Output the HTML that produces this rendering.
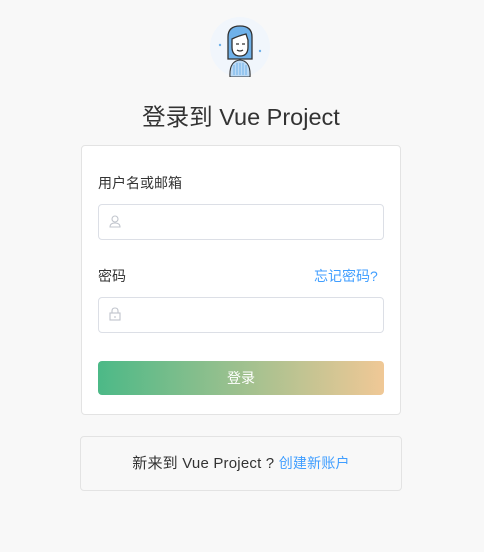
<!DOCTYPE html>
<html><head><meta charset="utf-8"><style>
body{margin:0;width:484px;height:552px;background:#f8f8f8;font-family:"Liberation Sans","Noto Sans CJK SC",sans-serif;position:relative;overflow:hidden}
.abs{position:absolute}
.title{left:0;width:482px;top:98px;text-align:center;font-size:23.5px;color:#333}
.card{left:81px;top:145px;width:318px;height:268px;background:#fff;border:1px solid #e3e3e3;border-radius:4px}
.lbl{font-size:14px;color:#333}
.inp{left:98px;width:284px;height:34px;border:1px solid #dcdfe6;border-radius:4px;background:#fff}
.btn{left:98px;top:361px;width:286px;height:34px;border-radius:4px;background:linear-gradient(90deg,#4cb987,#f0c896);color:#fff;font-size:14px;text-align:center;line-height:34px}
.foot{left:80px;top:436px;width:320px;height:53px;border:1px solid #e3e3e3;border-radius:4px;background:#f8f8f8;text-align:center;line-height:53px;font-size:15px;color:#333;letter-spacing:0.2px}
a{color:#409eff;text-decoration:none;font-size:14px}
</style></head><body>
<svg class="abs" style="left:210px;top:17px" width="60" height="60" viewBox="0 0 60 60">
<circle cx="30" cy="30" r="30" fill="#f1f6fc"/>
<path d="M18 42 V20 Q18 9 30 9 Q42 9 42 20 V42 Z" fill="#6fb1e9" stroke="#333" stroke-width="1.3"/>
<path d="M22 22 Q28 19 36 17 L38 23 V30 Q38 39 30 39 Q22 39 22 30 Z" fill="#fff" stroke="#333" stroke-width="1.3"/>
<path d="M26 27 h3 M32 27 h3" stroke="#333" stroke-width="1.2"/>
<path d="M27 33 Q30 35 33 33" stroke="#333" fill="none" stroke-width="1.2"/>
<path d="M20 60 Q19 44 30 43 Q41 44 40 60 Z" fill="#bcdaf5" stroke="#333" stroke-width="1.1"/>
<path d="M24 48 V58 M27 46 V58 M30 46 V58 M33 46 V58 M36 48 V58" stroke="#6fb1e9" stroke-width="1"/>
<circle cx="10" cy="28" r="1.2" fill="#6fb1e9"/><circle cx="50" cy="34" r="1.2" fill="#6fb1e9"/>
</svg>
<div class="abs title">登录到 Vue Project</div>
<div class="abs card"></div>
<div class="abs lbl" style="left:98px;top:173px">用户名或邮箱</div>
<div class="abs inp" style="top:204px"></div>
<svg class="abs" style="left:108px;top:214px" width="14" height="14" viewBox="0 0 14 14" fill="none" stroke="#c0c4cc" stroke-width="1.1"><circle cx="7" cy="5" r="3"/><path d="M2 13 Q2 9 7 9 Q12 9 12 13 Z"/></svg>
<div class="abs lbl" style="left:98px;top:266px">密码</div>
<a class="abs" style="left:314px;top:266px">忘记密码?</a>
<div class="abs inp" style="top:297px"></div>
<svg class="abs" style="left:108px;top:307px" width="14" height="14" viewBox="0 0 14 14" fill="none" stroke="#c0c4cc" stroke-width="1.1"><path d="M4 6 V4 Q4 1 7 1 Q10 1 10 4 V6"/><rect x="2" y="6" width="10" height="7"/><path d="M7 9 V11"/></svg>
<div class="abs btn">登录</div>
<div class="abs foot">新来到 Vue Project ? <a>创建新账户</a></div>
</body></html>
